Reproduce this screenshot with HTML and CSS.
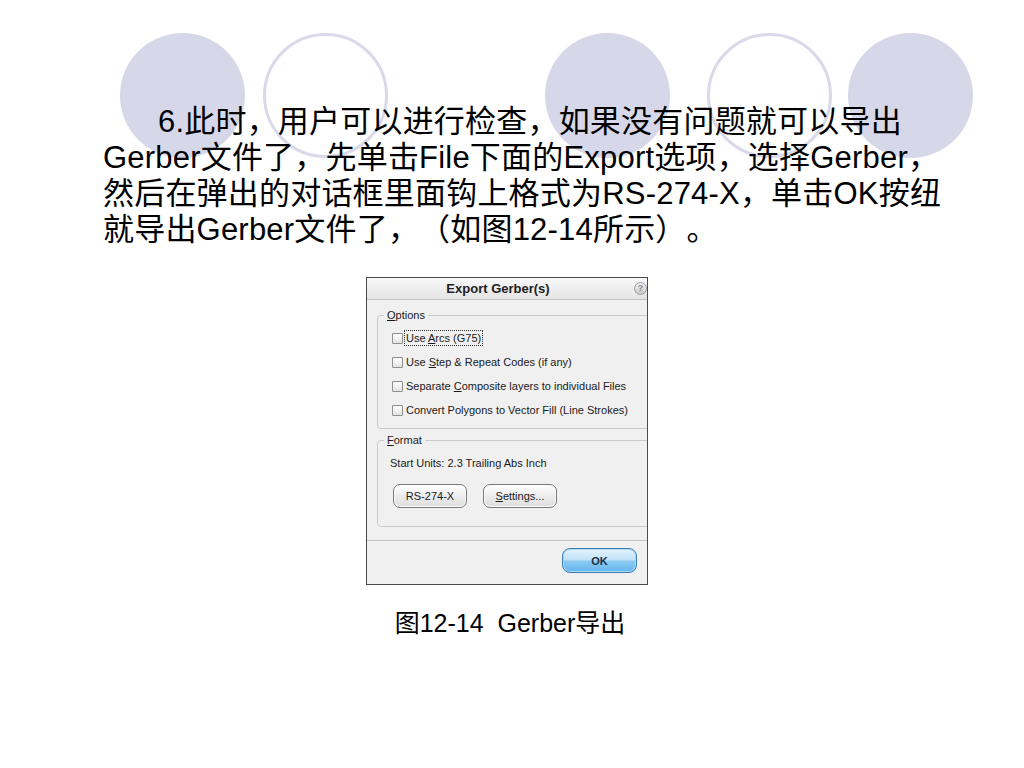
FILE: index.html
```html
<!DOCTYPE html>
<html lang="zh-CN">
<head>
  <meta charset="UTF-8" />
  <title>Gerber导出</title>
  <link rel="stylesheet" href="styles.css">
</head>
<body>
  <div class="deco">
    <span class="dot dot-fill d1"></span>
    <span class="dot dot-ring d2"></span>
    <span class="dot dot-fill d3"></span>
    <span class="dot dot-ring d4"></span>
    <span class="dot dot-fill d5"></span>
  </div>

  <p class="lead">6.此时，用户可以进行检查，如果没有问题就可以导出<br>Gerber文件了，先单击File下面的Export选项，选择Gerber，<br>然后在弹出的对话框里面钩上格式为RS-274-X，单击OK按纽<br>就导出Gerber文件了，（如图12-14所示）。</p>

  <div class="dlg">
    <div class="dlg-title">
      <span class="dlg-caption">Export Gerber(s)</span>
      <span class="help">?</span>
    </div>

    <div class="dlg-body">
      <fieldset class="group group-options">
        <legend><u>O</u>ptions</legend>
        <div class="row"><span class="chk"></span><span class="focus">Use <u>A</u>rcs (G75)</span></div>
        <div class="row"><span class="chk"></span><span>Use <u>S</u>tep &amp; Repeat Codes (if any)</span></div>
        <div class="row"><span class="chk"></span><span>Separate <u>C</u>omposite layers to individual Files</span></div>
        <div class="row"><span class="chk"></span><span>Convert Polygons to Vector Fill (Line Strokes)</span></div>
      </fieldset>

      <fieldset class="group group-format">
        <legend><u>F</u>ormat</legend>
        <div class="units">Start Units: 2.3 Trailing Abs Inch</div>
        <div class="btns">
          <span class="btn">RS-274-X</span>
          <span class="btn"><u>S</u>ettings...</span>
        </div>
      </fieldset>
    </div>

    <div class="dlg-foot">
      <span class="btn btn-ok">OK</span>
    </div>
  </div>

  <p class="caption">图12-14&nbsp; Gerber导出</p>
</body>
</html>
```

FILE: styles.css
```css
body {
  margin: 0;
  background: #ffffff;
  font-family: 'Liberation Sans', 'Noto Sans CJK SC', sans-serif;
  color: #000;
  position: relative;
  text-spacing-trim: space-all;
}

/* circles behind the text */
.deco {
  position: absolute;
  top: 33px;
  left: 0;
  display: flex;
  z-index: 0;
}

.dot {
  width: 125px;
  height: 125px;
  border-radius: 50%;
  box-sizing: border-box;
}

.dot-fill {
  background: #d7d7ea;
}

.dot-ring {
  border: 3px solid #d9d9ea;
}

.d1 { margin-left: 120px; }
.d2 { margin-left: 18px; }
.d3 { margin-left: 157px; }
.d4 { margin-left: 37px; }
.d5 { margin-left: 16px; }

.lead {
  position: relative;
  z-index: 1;
  margin: 0;
  padding: 104px 0 0 103px;
  font-size: 31px;
  line-height: 36px;
  text-indent: 55px;
  white-space: nowrap;
  letter-spacing: 0.2px;
}

/* dialog screenshot */
.dlg {
  position: relative;
  z-index: 1;
  box-sizing: border-box;
  width: 282px;
  height: 308px;
  margin: 29px 0 0 366px;
  border: 1px solid #4a4a4a;
  background: #f0f0f0;
  overflow: hidden;
  font-family: 'Liberation Sans', sans-serif;
  font-size: 11px;
  color: #1a1a1a;
  display: flex;
  flex-direction: column;
}

.dlg-title {
  height: 21px;
  display: flex;
  align-items: center;
  background: linear-gradient(#f8f8f8, #e4e4e4);
  border-bottom: 1px solid #c4c4c4;
}

.dlg-caption {
  width: 262px;
  text-align: center;
  font-weight: bold;
  font-size: 13px;
  color: #222;
}

.help {
  width: 11px;
  height: 11px;
  margin-left: 5px;
  border: 1px solid #9c9c9c;
  border-radius: 50%;
  background: linear-gradient(#f2f2f2, #c9c9c9);
  color: #8a8a8a;
  font-size: 9px;
  font-weight: bold;
  line-height: 11px;
  text-align: center;
  flex-shrink: 0;
}

.dlg-body {
  flex: 1;
  padding: 9px 0 12px 10px;
}

.group {
  margin: 0 -20px 0 0;
  border: 1px solid #cbcbcb;
  border-radius: 4px;
  padding: 4px 0 6px 14px;
}

.group legend {
  margin-left: -8px;
  padding: 0 3px;
  line-height: 13px;
}

.row {
  height: 24px;
  display: flex;
  align-items: center;
  gap: 3px;
  white-space: nowrap;
}

.chk {
  width: 9px;
  height: 9px;
  border: 1px solid #8e8f8f;
  border-radius: 1px;
  background: linear-gradient(#ffffff, #e2e2e2);
  flex-shrink: 0;
}

.focus {
  outline: 1px dotted #333;
  outline-offset: 1px;
}

.group-format {
  margin-top: 5px;
  padding: 6px 0 18px 12px;
}

.group-format legend {
  margin-left: -6px;
}

.units {
  line-height: 20px;
}

.btns {
  display: flex;
  gap: 16px;
  margin: 11px 0 0 3px;
}

.btn {
  box-sizing: border-box;
  width: 74px;
  height: 24px;
  border: 1px solid #7a7a7a;
  border-radius: 7px;
  background: linear-gradient(#ffffff, #ececec 50%, #dedede);
  box-shadow: inset 0 0 0 1px #fbfbfb;
  display: flex;
  align-items: center;
  justify-content: center;
}

.dlg-foot {
  border-top: 1px solid #c6c6c6;
  height: 44px;
  display: flex;
  justify-content: flex-end;
  align-items: flex-start;
  padding: 7px 10px 0 0;
  box-sizing: border-box;
}

.btn-ok {
  width: 75px;
  height: 25px;
  border-color: #3c7fb1;
  border-radius: 8px;
  background: linear-gradient(#e5f4fd, #bfe1f9 48%, #8ccbf3 52%, #62b5ee);
  box-shadow: inset 0 0 0 1px #a9dbf6;
  font-weight: bold;
  color: #1c2b45;
}

.caption {
  margin: 24px 0 0;
  padding-right: 4px;
  text-align: center;
  font-size: 25px;
  line-height: 28px;
}
```
